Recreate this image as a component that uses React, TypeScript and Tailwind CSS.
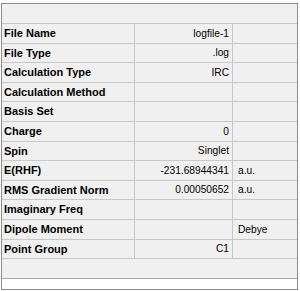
import React from 'react'

type Prop = {
  label: string
  value?: string
  unit?: string
}

const PROPS: Prop[] = [
  { label: 'File Name', value: 'logfile-1' },
  { label: 'File Type', value: '.log' },
  { label: 'Calculation Type', value: 'IRC' },
  { label: 'Calculation Method' },
  { label: 'Basis Set' },
  { label: 'Charge', value: '0' },
  { label: 'Spin', value: 'Singlet' },
  { label: 'E(RHF)', value: '-231.68944341', unit: 'a.u.' },
  { label: 'RMS Gradient Norm', value: '0.00050652', unit: 'a.u.' },
  { label: 'Imaginary Freq' },
  { label: 'Dipole Moment', unit: 'Debye' },
  { label: 'Point Group', value: 'C1' },
]

function PropRow({ label, value, unit }: Prop) {
  return (
    <div className="flex h-[19.6px] border-b border-[#c8c8c8]">
      <div className="w-[133px] shrink-0 border-r border-[#c8c8c8] pl-[2px] flex items-center text-[11px] font-bold text-black">
        {label}
      </div>
      <div className="w-[98px] shrink-0 border-r border-[#c8c8c8] pr-[3px] flex items-center justify-end text-[10.2px] text-black">
        {value}
      </div>
      <div className="flex-1 pl-[5px] flex items-center text-[10.2px] text-black">
        {unit}
      </div>
    </div>
  )
}

export default function App() {
  return (
    <div className="w-[300px] h-[291px] bg-white pt-[3px] pl-[1px] font-['Liberation_Sans',Arial,sans-serif]">
      <div className="w-[297px] h-[287px] border border-[#8c8c8c] flex flex-col">
        <div className="flex-1 bg-[#f0f0f0] border-b border-[#a8a8a8]">
          <div className="h-[19px]" />
          <div className="border-t border-[#c8c8c8]">
            {PROPS.map((p) => (
              <PropRow key={p.label} {...p} />
            ))}
          </div>
        </div>
        <div className="h-[10px] bg-white" />
      </div>
    </div>
  )
}
